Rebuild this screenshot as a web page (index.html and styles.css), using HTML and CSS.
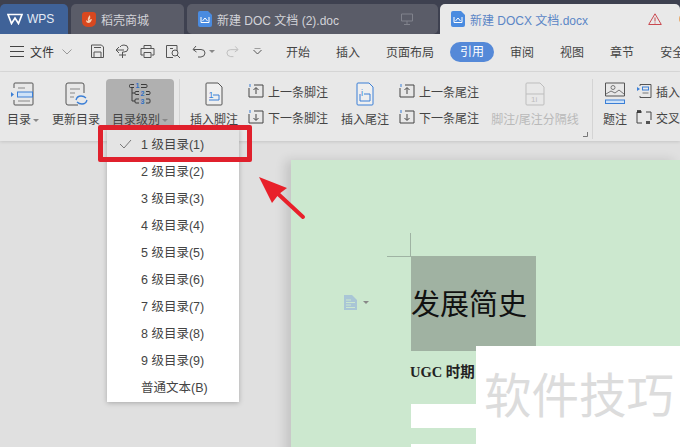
FILE: index.html
```html
<!DOCTYPE html>
<html lang="zh-CN">
<head>
    <meta charset="UTF-8">
    <title>WPS</title>
    <link rel="stylesheet" href="styles.css">
</head>
<body>
    <div class="tabbar">
        <div class="tab tab_wps">
            <svg width="16" height="12" viewBox="0 0 16 12"><path d="M1 1.500h14L11.500 10.500 8 5 4.500 10.500z" fill="none" stroke="#fff" stroke-width="1.700"/></svg>
            <span>WPS</span>
        </div>
        <div class="tab tab_shop">
            <svg width="14" height="16" viewBox="0 0 14 16"><path d="M3 1h8q3 0 3 3v6q0 6-7 6t-7-6V4q0-3 3-3z" fill="#d9481f"/><path d="M8 4q1 3-1 5 2-1 3-1-1 4-3.500 4T4 9q1 1 2 1-1-3 2-6z" fill="#f5cdb0"/></svg>
            <span>稻壳商城</span>
        </div>
        <div class="tab tab_doc">
            <svg width="14" height="16" viewBox="0 0 14 16"><path d="M2 0h8l4 4v10q0 2-2 2H2q-2 0-2-2V2q0-2 2-2z" fill="#4a8be0"/><path d="M3 6v5.500h8V6M4.500 10l2.500-3 2.500 3" fill="none" stroke="#fff"/></svg>
            <span>新建 DOC 文档 (2).doc</span>
            <svg class="tab_screen" width="12" height="12" viewBox="0 0 12 12"><path d="M.5 1h11v7H.5zM6 8v3M3 11.500h6" fill="none" stroke="#80828c"/></svg>
        </div>
        <div class="tab tab_active">
            <svg width="14" height="16" viewBox="0 0 14 16"><path d="M2 0h8l4 4v10q0 2-2 2H2q-2 0-2-2V2q0-2 2-2z" fill="#4a8be0"/><path d="M3 6v5.500h8V6M4.500 10l2.500-3 2.500 3" fill="none" stroke="#fff"/></svg>
            <span>新建 DOCX 文档.docx</span>
            <svg class="tab_warn" width="14" height="12" viewBox="0 0 14 12"><path d="M7 .8 13.300 11.500H.7zM7 4.500v4M7 9.500v1" fill="none" stroke="#c9484f"/></svg>
            <i class="tab_dot"></i>
        </div>
    </div>

    <div class="menubar">
        <div class="menu_left">
            <svg width="14" height="11" viewBox="0 0 14 11"><path d="M0 .5h14M0 5.500h14M0 10.500h14" stroke="#444"/></svg>
            <span class="menu_file">文件</span>
            <svg width="10" height="6" viewBox="0 0 10 6"><path d="M.5.500 5 5 9.500.5" fill="none" stroke="#999"/></svg>
        </div>
        <i class="menu_sep"></i>
        <div class="quick">
            <svg width="15" height="15" viewBox="0 0 15 15"><path d="M1.500 1h10l2 2v10.500h-12zM4 13.500V8h7v5.500M4 3.500h7" fill="none" stroke="#555"/></svg>
            <svg width="15" height="15" viewBox="0 0 15 15"><path d="M5 3q1-2 4-2 4 0 4 3.500T9 8H7.500v6M1 6h8M4 3l-3 3 3 3M4 11h7" fill="none" stroke="#555"/></svg>
            <svg width="15" height="15" viewBox="0 0 15 15"><path d="M4 4.500V1.500h7v3M3.500 11H1V4.500h13V11h-2.500M4 8.500h7v5H4z" fill="none" stroke="#555"/></svg>
            <svg width="16" height="15" viewBox="0 0 16 15"><path d="M12 7V1.500H1.500v12H8M5 4.500h3" fill="none" stroke="#555"/><circle cx="10" cy="9" r="3" fill="none" stroke="#555"/><path d="m12 11 3 3" stroke="#555"/></svg>
            <svg class="quick_undo" width="14" height="13" viewBox="0 0 14 13"><path d="M4 1 1 4.500 4.500 7M1.500 4.500H9q4 0 4 3.500t-4 4H6" fill="none" stroke="#555"/></svg>
            <i class="caret"></i>
            <svg class="quick_redo" width="13" height="13" viewBox="0 0 14 13"><path d="M10 1l3 3.500L9.500 7M12.500 4.500H5Q1 4.500 1 8t4 4h3" fill="none" stroke="#bbb"/></svg>
            <svg class="quick_more" width="9" height="8" viewBox="0 0 9 8"><path d="M.5 2 4.500 6 8.500 2M1.500 0h6" fill="none" stroke="#555"/></svg>
        </div>
        <nav class="menu_tabs">
            <span>开始</span>
            <span>插入</span>
            <span>页面布局</span>
            <span class="menu_on">引用</span>
            <span>审阅</span>
            <span>视图</span>
            <span>章节</span>
            <span>安全</span>
        </nav>
    </div>

    <div class="ribbon">
        <div class="tool tool_toc">
            <svg width="24" height="24" viewBox="0 0 24 24"><path d="M3 6V2q0-1 1-1h17q1 0 1 1v20q0 1-1 1H4q-1 0-1-1v-4" fill="none" stroke="#555"/><path d="M7 6h7M7 19h12" stroke="#888"/><rect x="6.500" y="10" width="15" height="5" fill="#cfe2f7" stroke="#3b7fd6"/><path d="m0 10 3 2.500L0 15z" fill="#3b7fd6"/></svg>
            <span class="tool_label">目录<i class="caret"></i></span>
        </div>
        <div class="tool tool_update">
            <svg width="24" height="24" viewBox="0 0 24 24"><path d="M14 23H4q-2 0-2-2V3q0-2 2-2h14q2 0 2 2v8" fill="none" stroke="#555"/><path d="M6 7h10M6 11h5M6 15h4" stroke="#888"/><path d="M12 18q1-4 5-4 3 0 5 2M23 18q-1 4-5 4-3 0-5-2" fill="none" stroke="#3b7fd6" stroke-width="1.300"/></svg>
            <span class="tool_label">更新目录</span>
        </div>
        <div class="tool tool_level">
            <svg width="24" height="24" viewBox="0 0 24 24"><path d="M6 2.500H2.500q-1 0-1 1v1q0 1 1 1H6M13 2.500h5q1 0 1 1v1q0 1-1 1h-5M11 9.500H8q-1 0-1 1v1q0 1 1 1h3M18 9.500h3q1 0 1 1v1q0 1-1 1h-3M11 17H8q-1 0-1 1v2q0 1 1 1h3M18 17h3q1 0 1 1v2q0 1-1 1h-3M4 5.500V19h3M4 11h3" fill="none" stroke="#3a3a3a"/><g class="level_num"><text x="9.500" y="6">1</text><text x="14.500" y="13.500">2</text><text x="14.500" y="21.500">3</text></g></svg>
            <span class="tool_label">目录级别<i class="caret"></i></span>
        </div>
        <i class="ribbon_sep"></i>
        <div class="tool tool_note">
            <svg width="18" height="24" viewBox="0 0 18 24"><path d="M1 2q0-1 1-1h11l4 4v17q0 1-1 1H2q-1 0-1-1z" fill="#fff" fill-opacity=".3" stroke="#555"/><path d="M4 18h10v-5H8" fill="none" stroke="#3b7fd6"/><text class="note_num" x="3.500" y="16">1</text></svg>
            <span class="tool_label">插入脚注</span>
        </div>
        <div class="stack stack_foot">
            <div class="stack_row">
                <svg width="16" height="16" viewBox="0 0 16 16"><path d="M1 5v9h14V2H6M8 11V5M5.500 7 8 4.500 10.500 7" fill="none" stroke="#444"/><path d="M2 1v3" stroke="#3b7fd6"/></svg>
                <span>上一条脚注</span>
            </div>
            <div class="stack_row">
                <svg width="16" height="16" viewBox="0 0 16 16"><path d="M1 5v9h14V2H6M8 5v6M5.500 9 8 11.500 10.500 9" fill="none" stroke="#444"/><path d="M2 1v3" stroke="#3b7fd6"/></svg>
                <span>下一条脚注</span>
            </div>
        </div>
        <div class="tool tool_endnote">
            <svg width="18" height="24" viewBox="0 0 18 24"><path d="M1 2q0-1 1-1h11l4 4v17q0 1-1 1H2q-1 0-1-1z" fill="#fff" fill-opacity=".3" stroke="#3b7fd6"/><path d="M4 12v7h10v-7H8" fill="none" stroke="#3b7fd6"/><text class="note_num" x="5" y="14">i</text></svg>
            <span class="tool_label">插入尾注</span>
        </div>
        <div class="stack stack_end">
            <div class="stack_row">
                <svg width="16" height="16" viewBox="0 0 16 16"><path d="M1 5v9h14V2H6M8 11V5M5.500 7 8 4.500 10.500 7" fill="none" stroke="#444"/><path d="M2 1v3" stroke="#3b7fd6"/></svg>
                <span>上一条尾注</span>
            </div>
            <div class="stack_row">
                <svg width="16" height="16" viewBox="0 0 16 16"><path d="M1 5v9h14V2H6M8 5v6M5.500 9 8 11.500 10.500 9" fill="none" stroke="#444"/><path d="M2 1v3" stroke="#3b7fd6"/></svg>
                <span>下一条尾注</span>
            </div>
        </div>
        <div class="tool tool_split">
            <svg width="20" height="24" viewBox="0 0 20 24"><path d="M1 2q0-1 1-1h13l4 4v17q0 1-1 1H2q-1 0-1-1zM1 12h18" fill="none" stroke="#bdbdbd"/><text class="split_num" x="6" y="20">1i</text></svg>
            <span class="tool_label">脚注/尾注分隔线</span>
        </div>
        <svg class="launcher" width="5" height="5" viewBox="0 0 5 5"><path d="M0 4.500h4.500V0" fill="none" stroke="#777"/></svg>
        <i class="ribbon_sep ribbon_sep2"></i>
        <div class="tool tool_caption">
            <svg width="20" height="24" viewBox="0 0 20 24"><path d="M.5 1h19v13H.5z" fill="none" stroke="#555"/><circle cx="8" cy="5.500" r="2" fill="none" stroke="#777"/><path d="m1 12 5-3 4 2 4-3 5 4" fill="none" stroke="#777"/><rect x=".5" y="18" width="19" height="3.500" fill="#cfe2f7" stroke="#3b7fd6"/></svg>
            <span class="tool_label">题注</span>
        </div>
        <div class="stack stack_cap">
            <div class="stack_row">
                <svg width="16" height="16" viewBox="0 0 16 16"><path d="M4 3V1.500h11v13H4V13" fill="none" stroke="#555"/><rect x="6.500" y="4" width="6" height="3" fill="none" stroke="#3b7fd6"/><path d="M6.500 10h6" stroke="#777"/><path d="m1 4 3 2-3 2z" fill="#3b7fd6"/></svg>
                <span>插入</span>
            </div>
            <div class="stack_row">
                <svg width="16" height="16" viewBox="0 0 16 16"><path d="M6 3H1v11h5M10 3h5v8" fill="none" stroke="#444"/><path d="M2 1v3M4 1v3M11 12v3M13 12v3" stroke="#222" stroke-width="1.500"/></svg>
                <span>交叉</span>
            </div>
        </div>
    </div>

    <main class="workspace">
        <div class="page">
            <i class="crop"></i>
            <div class="page_head">
                <h1>发展简史</h1>
            </div>
            <p class="page_sub">UGC 时期</p>
            <div class="page_blank"></div>
            <div class="page_blank page_blank2"></div>
            <div class="page_tag">
                <svg width="13" height="15" viewBox="0 0 13 15"><path d="M0 0h8l5 5v10H0z" fill="#a9c6d6"/><path d="M2 5h5M2 7.500h9M2 10h5M2 12.500h9" stroke="#cce8cf"/></svg>
                <i class="caret"></i>
            </div>
            <div class="watermark">软件技巧</div>
        </div>
    </main>

    <ul class="dropdown">
        <li class="dropdown_on">
            <svg width="13" height="10" viewBox="0 0 13 10"><path d="m1 5 4 4 7-8" fill="none" stroke="#777"/></svg>
            1 级目录(1)
        </li>
        <li>2 级目录(2)</li>
        <li>3 级目录(3)</li>
        <li>4 级目录(4)</li>
        <li>5 级目录(5)</li>
        <li>6 级目录(6)</li>
        <li>7 级目录(7)</li>
        <li>8 级目录(8)</li>
        <li>9 级目录(9)</li>
        <li>普通文本(B)</li>
    </ul>

    <div class="mark_box"></div>
    <svg class="mark_arrow" width="60" height="60" viewBox="0 0 60 60"><path d="M47 43 20 18" stroke="#e8202a" stroke-width="4" stroke-linecap="round"/><path d="M3 3 31 14 23 20 16 29z" fill="#e8202a"/></svg>
</body>
</html>
```

FILE: styles.css
```css
body, html, * {
    box-sizing: border-box;
    margin: 0;
    padding: 0;
}
html, body {
    height: 447px;
    overflow: hidden;
}
body {
    position: relative;
    font-family: "Liberation Sans", "Noto Sans CJK SC", sans-serif;
    font-size: 12px;
    color: #444;
    background-color: #e0e0e0;
}
i {
    display: block;
    font-style: normal;
}
svg {
    display: block;
    flex: none;
}
.caret {
    width: 0;
    height: 0;
    border-left: 3px solid transparent;
    border-right: 3px solid transparent;
    border-top: 3px solid #888;
}

/* tabs */
.tabbar {
    display: flex;
    gap: 3px;
    height: 34px;
    padding-top: 4px;
    background-color: #3e4150;
}
.tab {
    display: flex;
    flex: none;
    align-items: center;
    height: 30px;
    border-radius: 5px 5px 0 0;
    background-color: #5a5c68;
    color: #d2d3d8;
    white-space: nowrap;
}
.tab_wps {
    width: 68px;
    padding-left: 7px;
    gap: 4px;
    background-color: #3f6298;
    color: #e4ebf5;
}
.tab_shop {
    width: 113px;
    padding-left: 11px;
    gap: 5px;
}
.tab_doc {
    width: 251px;
    padding-left: 11px;
    gap: 5px;
    border-radius: 5px;
}
.tab_screen {
    margin-left: 57px;
}
.tab_active {
    flex: 1;
    min-width: 0;
    margin-left: -1px;
    padding-left: 11px;
    gap: 5px;
    background-color: #e9e9e9;
    color: #5b86c6;
}
.tab_warn {
    margin-left: 55px;
}
.tab_dot {
    width: 6px;
    height: 6px;
    margin-left: 12px;
    border-radius: 50%;
    background-color: #e8a868;
}

/* menu row */
.menubar {
    display: flex;
    align-items: center;
    height: 38px;
    padding-left: 10px;
    padding-bottom: 2px;
    border-bottom: 1px solid #dadada;
    background-color: #e9e9e9;
    white-space: nowrap;
    overflow: hidden;
}
.menu_left {
    display: flex;
    align-items: center;
}
.menu_file {
    margin: 0 8px 0 6px;
    color: #333;
}
.menu_sep {
    width: 1px;
    height: 24px;
    margin: 0 10px 0 8px;
    background-color: #cfcfcf;
}
.quick {
    display: flex;
    align-items: center;
    gap: 10px;
}
.quick_undo {
    margin-left: 1px;
}
.quick .caret {
    margin-left: -7px;
}
.quick_redo {
    margin-left: 1px;
}
.quick_more {
    margin-left: 4px;
}
.menu_tabs {
    display: flex;
    align-items: center;
    gap: 26px;
    margin-left: 24px;
}
.menu_on {
    height: 20px;
    margin: 0 -10px;
    padding: 0 10px;
    border-radius: 10px;
    background-color: #5589d8;
    color: #fff;
    line-height: 20px;
}

/* ribbon */
.ribbon {
    display: flex;
    height: 69px;
    padding: 7px 0 0 4px;
    background-color: #e8e8e8;
    box-shadow: 0 1px 3px rgba(0, 0, 0, 0.12);
    white-space: nowrap;
    position: relative;
}
.tool {
    display: flex;
    flex-direction: column;
    align-items: center;
    height: 49px;
    padding-top: 3px;
}
.tool_label {
    display: flex;
    align-items: center;
    gap: 2px;
    margin-top: 6px;
    line-height: 16px;
}
.tool_toc {
    width: 38px;
}
.tool_update {
    width: 56px;
    margin-left: 6px;
}
.tool_level {
    width: 68px;
    margin-left: 2px;
    border-radius: 4px;
    background-color: #b0b0b0;
}
.level_num text {
    font-size: 7px;
    font-weight: bold;
    fill: #2f6fc4;
    text-anchor: middle;
}
.ribbon_sep {
    width: 1px;
    height: 60px;
    margin: 0 10px 0 5px;
    background-color: #d4d4d4;
}
.tool_note {
    width: 48px;
}
.note_num {
    font-size: 9px;
    fill: #3b7fd6;
}
.stack {
    display: flex;
    flex-direction: column;
    gap: 6px;
    padding-top: 2px;
}
.stack_row {
    display: flex;
    align-items: center;
    gap: 4px;
    height: 20px;
}
.stack_foot {
    margin-left: 10px;
}
.tool_endnote {
    width: 48px;
    margin-left: 13px;
}
.stack_end {
    margin-left: 10px;
}
.tool_split {
    width: 90px;
    margin-left: 11px;
    color: #b9b9b9;
}
.split_num {
    font-size: 8px;
    fill: #bdbdbd;
}
.launcher {
    margin: 53px 0 0 3px;
}
.ribbon_sep2 {
    margin: 0 10px 0 4px;
}
.tool_caption {
    width: 24px;
}
.stack_cap {
    margin-left: 9px;
}

/* document */
.workspace {
    height: 306px;
    padding: 19px 0 0 291px;
    overflow: hidden;
}
.page {
    position: relative;
    height: 300px;
    padding: 96px 0 0 120px;
    background-color: #cce8cf;
    box-shadow: -6px 0 10px rgba(0, 0, 0, 0.12);
}
.crop {
    position: absolute;
    left: 96px;
    top: 73px;
    width: 24px;
    height: 24px;
    border-right: 1px solid #9fb3a3;
    border-bottom: 1px solid #9fb3a3;
}
.page_head {
    width: 125px;
    height: 95px;
    background-color: #a0b2a2;
}
.page_head h1 {
    padding-top: 29px;
    font-family: "Liberation Serif", "Noto Sans CJK SC", serif;
    font-size: 29px;
    font-weight: normal;
    line-height: 40px;
    color: #111;
}
.page_sub {
    margin: 11px 0 0 -1px;
    font-family: "Liberation Serif", "Noto Sans CJK SC", serif;
    font-size: 14.500px;
    font-weight: bold;
    line-height: 20px;
    color: #222;
}
.page_blank {
    width: 65px;
    height: 24px;
    margin-top: 22px;
    background-color: #fff;
}
.page_blank2 {
    margin-top: 16px;
}
.page_tag {
    position: absolute;
    left: 53px;
    top: 135px;
    display: flex;
    align-items: center;
    gap: 6px;
}
.watermark {
    position: absolute;
    left: 185px;
    top: 186px;
    width: 300px;
    height: 110px;
    padding: 16px 0 0 8px;
    background-color: #fff;
    font-size: 47.500px;
    line-height: 70px;
    color: #dcdcdc;
}

/* dropdown and the red marks over it */
.dropdown {
    position: absolute;
    left: 107px;
    top: 128px;
    width: 132px;
    padding-top: 2px;
    height: 274px;
    list-style: none;
    background-color: #fff;
    box-shadow: 0 1px 5px rgba(0, 0, 0, 0.25);
}
.dropdown li {
    position: relative;
    height: 27px;
    padding-left: 34px;
    line-height: 30px;
    font-size: 12.500px;
    color: #444;
}
.dropdown_on {
    background-color: #e4e4e4;
}
.dropdown_on svg {
    position: absolute;
    left: 12px;
    top: 9px;
}
.mark_box {
    position: absolute;
    left: 98px;
    top: 125px;
    width: 154px;
    height: 37px;
    border: 5px solid #e0202c;
    border-radius: 2px;
}
.mark_arrow {
    position: absolute;
    left: 256px;
    top: 174px;
}
```
